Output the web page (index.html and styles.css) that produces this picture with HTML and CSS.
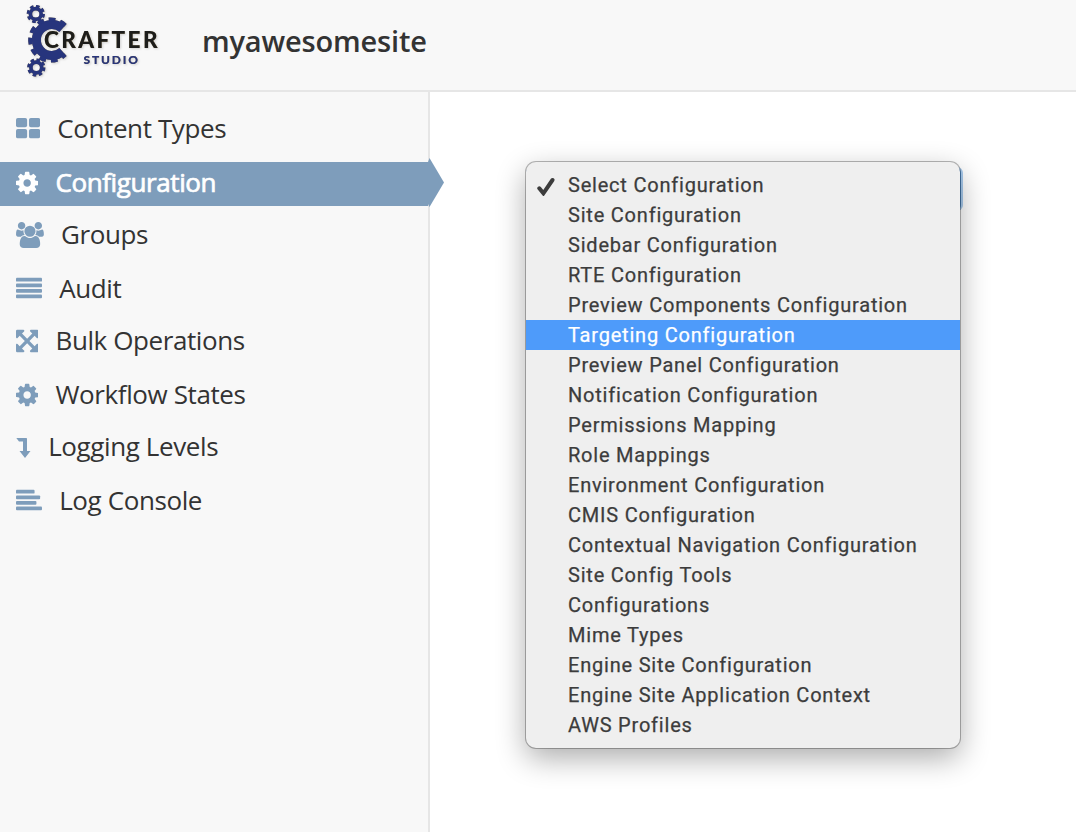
FILE: index.html
```html
<!DOCTYPE html>
<html lang="en">
<head>
<meta charset="utf-8">
<title>Crafter Studio - myawesomesite</title>
<link rel="stylesheet" href="styles.css">
</head>
<body>
<header class="topbar">
  <svg class="logo" width="150" height="84" viewBox="16 0 150 84" role="img" aria-label="Crafter Studio">
    <g class="logo-art">
      <g class="gear">
        <circle cx="35.8" cy="14" r="5.4" stroke-width="3.6"/>
        <circle cx="35.8" cy="14" r="7.8" stroke-width="2.6" stroke-dasharray="3.5 2.63"/>
        <circle cx="36.3" cy="67.5" r="5.4" stroke-width="3.6"/>
        <circle cx="36.3" cy="67.5" r="7.8" stroke-width="2.6" stroke-dasharray="3.5 2.63"/>
        <path d="M62.400 28.600A15.500 15.500 0 1 0 62.400 51.400" stroke-width="9"/>
        <path d="M65.300 25.400A20.600 20.600 0 1 0 65.300 54.600" stroke-width="4" stroke-dasharray="6.5 5"/>
      </g>
      <text class="logo-name" x="44" y="47.7" textLength="113.500">CRAFTER</text>
      <text class="logo-sub" x="83.5" y="64.3" textLength="54.500">STUDIO</text>
    </g>
  </svg>
  <h1 class="site-name">myawesomesite</h1>
</header>
<div class="layout">
  <nav class="sidebar">
    <a class="nav-item">
      <svg class="icon" width="24.1" height="26" viewBox="64 0 1664 1792"><rect x="64" y="128" width="768" height="640" rx="128"/><rect x="960" y="128" width="768" height="640" rx="128"/><rect x="64" y="896" width="768" height="640" rx="128"/><rect x="960" y="896" width="768" height="640" rx="128"/></svg>
      <span>Content Types</span>
    </a>
    <a class="nav-item active">
      <svg class="icon" width="22.3" height="26" viewBox="128 0 1536 1792"><path id="cog" d="M1152 896q0-106-75-181t-181-75-181 75-75 181 75 181 181 75 181-75 75-181zm512-109v222q0 12-8 23t-20 13l-185 28q-19 54-39 91 35 50 107 138 10 12 10 25t-9 23q-27 37-99 108t-94 71q-12 0-26-9l-138-108q-44 23-91 38-16 136-29 186-7 28-36 28h-222q-14 0-24.500-8.500t-11.500-21.500l-28-184q-49-16-90-37l-141 107q-10 9-25 9-14 0-25-11-126-114-165-168-7-10-7-23 0-12 8-23 15-21 51-66.500t54-70.500q-27-50-41-99l-183-27q-13-2-21-12.500t-8-23.500v-222q0-12 8-23t19-13l186-28q14-46 39-92-40-57-107-138-10-12-10-24 0-10 9-23 26-36 98.500-107.500t94.500-71.500q13 0 26 10l138 107q44-23 91-38 16-136 29-186 7-28 36-28h222q14 0 24.500 8.500t11.500 21.500l28 184q49 16 90 37l142-107q9-9 24-9 13 0 25 10 129 119 165 170 7 8 7 22 0 12-8 23-15 21-51 66.500t-54 70.500q26 50 41 98l183 28q13 2 21 12.500t8 23.500z"/></svg>
      <span>Configuration</span>
      <svg class="pointer" width="16" height="50" viewBox="0 0 16 50"><path d="M0 4L1.500 0 16 24.500 1.500 49 0 46z"/></svg>
    </a>
    <a class="nav-item">
      <svg class="icon" width="27.9" height="26" viewBox="0 0 1920 1792"><path d="M593 896q-162 5-265 128h-134q-82 0-138-40.500t-56-118.500q0-353 124-353 6 0 43.500 21t97.500 42.500 119 21.500q67 0 133-23-5 37-5 66 0 139 81 256zm1071 637q0 120-73 189.500t-194 69.500h-874q-121 0-194-69.500t-73-189.500q0-53 3.500-103.500t14-109 26.500-108.500 43-97.500 62-81 85.500-53.500 111.500-20q10 0 43 21.500t73 48 107 48 135 21.500 135-21.500 107-48 73-48 43-21.500q61 0 111.500 20t85.500 53.500 62 81 43 97.500 26.500 108.500 14 109 3.500 103.500zm-1024-1277q0 106-75 181t-181 75-181-75-75-181 75-181 181-75 181 75 75 181zm704 384q0 159-112.500 271.500t-271.500 112.500-271.500-112.500-112.500-271.500 112.500-271.500 271.500-112.500 271.500 112.500 112.500 271.500zm576 225q0 78-56 118.500t-138 40.500h-134q-103-123-265-128 81-117 81-256 0-29-5-66 66 23 133 23 59 0 119-21.500t97.500-42.500 43.500-21q124 0 124 353zm-128-609q0 106-75 181t-181 75-181-75-75-181 75-181 181-75 181 75 75 181z"/></svg>
      <span>Groups</span>
    </a>
    <a class="nav-item">
      <svg class="icon" width="26" height="26" viewBox="0 0 1792 1792"><rect y="128" width="1792" height="256" rx="64"/><rect y="512" width="1792" height="256" rx="64"/><rect y="896" width="1792" height="256" rx="64"/><rect y="1280" width="1792" height="256" rx="64"/></svg>
      <span>Audit</span>
    </a>
    <a class="nav-item">
      <svg class="icon" width="22.3" height="26" viewBox="128 0 1536 1792"><path d="M1411 541l-355 355 355 355 144-144q29-31 70-14 39 17 39 59v448q0 26-19 45t-45 19h-448q-42 0-59-40-17-39 14-69l144-144-355-355-355 355 144 144q31 30 14 69-17 40-59 40h-448q-26 0-45-19t-19-45v-448q0-42 40-59 39-17 69 14l144 144 355-355-355-355-144 144q-19 19-45 19-12 0-24-5-40-17-40-59v-448q0-26 19-45t45-19h448q42 0 59 40 17 39-14 69l-144 144 355 355 355-355-144-144q-31-30-14-69 17-40 59-40h448q26 0 45 19t19 45v448q0 42-39 59-13 5-25 5-26 0-45-19z"/></svg>
      <span>Bulk Operations</span>
    </a>
    <a class="nav-item">
      <svg class="icon" width="22.3" height="26" viewBox="128 0 1536 1792"><use href="#cog"/></svg>
      <span>Workflow States</span>
    </a>
    <a class="nav-item">
      <svg class="icon" width="15" height="26" viewBox="0 0 15 26"><path d="M.3 4H10.300Q11 4 11 4.700V17H14.500L9 24 3.500 17H7V7.500H3z"/></svg>
      <span>Logging Levels</span>
    </a>
    <a class="nav-item">
      <svg class="icon" width="26" height="26" viewBox="0 0 1792 1792"><rect y="128" width="1280" height="256" rx="64"/><rect y="512" width="1664" height="256" rx="64"/><rect y="896" width="1408" height="256" rx="64"/><rect y="1280" width="1792" height="256" rx="64"/></svg>
      <span>Log Console</span>
    </a>
  </nav>
  <main class="content">
    <div class="select">
      <ul class="menu">
        <li class="option"><svg class="check" width="20" height="20" viewBox="0 0 20 20"><path d="M3.300 12.300L7.400 17.300 16.500 4"/></svg>Select Configuration</li>
        <li class="option">Site Configuration</li>
        <li class="option">Sidebar Configuration</li>
        <li class="option">RTE Configuration</li>
        <li class="option">Preview Components Configuration</li>
        <li class="option highlighted">Targeting Configuration</li>
        <li class="option">Preview Panel Configuration</li>
        <li class="option">Notification Configuration</li>
        <li class="option">Permissions Mapping</li>
        <li class="option">Role Mappings</li>
        <li class="option">Environment Configuration</li>
        <li class="option">CMIS Configuration</li>
        <li class="option">Contextual Navigation Configuration</li>
        <li class="option">Site Config Tools</li>
        <li class="option">Configurations</li>
        <li class="option">Mime Types</li>
        <li class="option">Engine Site Configuration</li>
        <li class="option">Engine Site Application Context</li>
        <li class="option">AWS Profiles</li>
      </ul>
    </div>
  </main>
</div>
</body>
</html>
```
FILE: styles.css
```css
* { box-sizing: border-box; }
body {
  margin: 0;
  height: 832px;
  display: flex;
  flex-direction: column;
  overflow: hidden;
  background: #fff;
  color: #333;
  font-family: "Open Sans", sans-serif;
}
.topbar {
  height: 92px;
  flex: none;
  display: flex;
  padding-left: 16px;
  gap: 36px;
  background: #f8f8f8;
  border-bottom: 2px solid #e6e6e6;
}
.logo { flex: none; }
.logo-art { filter: drop-shadow(0 0 0.6px #a08c60) drop-shadow(1.5px 1.5px 0.8px rgba(0, 0, 0, 0.15)); }
.gear { fill: none; stroke: #27357d; }
.logo-name { font: 900 22.5px Lato, sans-serif; fill: #1d1d1b; }
.logo-sub { font: 900 12px Lato, sans-serif; fill: #27357d; }
.site-name {
  margin: 0;
  font-size: 29px;
  font-weight: 600;
  letter-spacing: -0.17px;
  line-height: 82px;
}
.layout { flex: 1; display: flex; }
.sidebar {
  width: 430px;
  flex: none;
  padding-top: 16px;
  background: #f8f8f8;
  border-right: 2px solid #e6e6e6;
}
.nav-item {
  position: relative;
  display: flex;
  gap: 17.2px;
  height: 44px;
  padding-left: 16px;
  margin-bottom: 8px;
  font-size: 26px;
  letter-spacing: -0.4px;
  line-height: 40px;
  white-space: nowrap;
}
.nav-item:nth-child(odd) { margin-bottom: 10px; }
.icon { flex: none; margin-top: 8px; fill: #7e9dbb; }
.active { background: #7e9dbb; color: #fff; -webkit-text-stroke: 0.7px #fff; }
.active .icon { fill: #fff; }
.pointer { position: absolute; left: 428px; top: -4px; fill: #7e9dbb; }
.content { flex: 1; padding: 76px 113px 0 96px; }
.select {
  position: relative;
  height: 42px;
  border-radius: 5px;
  background: #5a9bdc;
  width: 435px;
  box-shadow: 1px 0 0 1px #a9cbed;
}
.menu {
  position: absolute;
  top: -6px;
  left: 0;
  width: 434px;
  margin: 0;
  padding: 8px 0;
  list-style: none;
  background: #efefef;
  border-radius: 10px;
  box-shadow: 0 0 0 1px rgba(0, 0, 0, 0.28), 0 10px 30px rgba(0, 0, 0, 0.33);
  font-family: Roboto, sans-serif;
  font-size: 20px;
  letter-spacing: 0.79px;
  line-height: 30px;
  color: #3c3c3c;
  -webkit-text-stroke: 0.25px currentColor;
}
.option { position: relative; padding-left: 42px; height: 30px; white-space: nowrap; }
.highlighted { background: #4e9bfa; color: #fff; }
.check {
  position: absolute;
  left: 10px;
  top: 6px;
  fill: none;
  stroke: #3c3c3c;
  stroke-width: 4;
  stroke-linecap: round;
}
```
